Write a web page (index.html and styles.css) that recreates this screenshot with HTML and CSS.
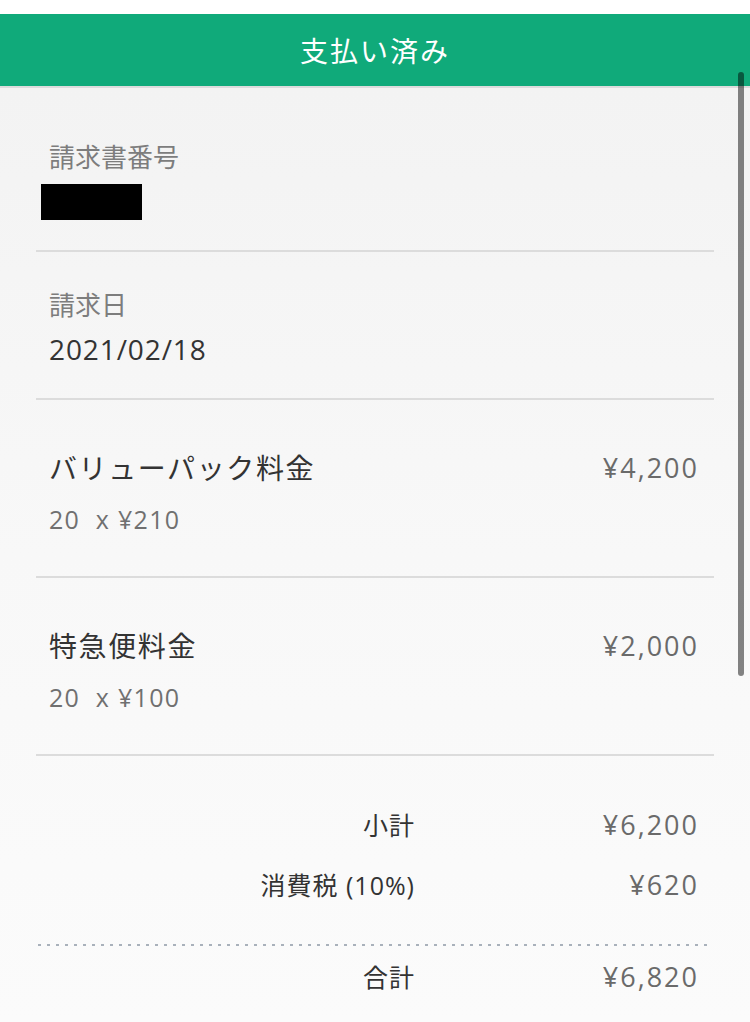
FILE: index.html
```html
<!DOCTYPE html>
<html lang="ja">
<head>
<meta charset="utf-8">
<title>支払い済み</title>
<link rel="stylesheet" href="styles.css">
</head>
<body>
<div class="topstrip"></div>
<header class="header"><h1 class="title">支払い済み</h1></header>
<main class="content">
  <section class="block block-first">
    <div class="label">請求書番号</div>
    <div class="redacted"></div>
  </section>
  <section class="block block-date">
    <div class="label">請求日</div>
    <div class="date">2021/02/18</div>
  </section>
  <section class="block item">
    <div class="item-row">
      <div class="item-name">バリューパック料金</div>
      <div class="price">¥4,200</div>
    </div>
    <div class="item-sub">20&nbsp;&nbsp;x ¥210</div>
  </section>
  <section class="block item">
    <div class="item-row">
      <div class="item-name">特急便料金</div>
      <div class="price">¥2,000</div>
    </div>
    <div class="item-sub">20&nbsp;&nbsp;x ¥100</div>
  </section>
  <section class="totals">
    <div class="t-row t-sub">
      <div class="t-label">小計</div>
      <div class="t-value">¥6,200</div>
    </div>
    <div class="t-row t-tax">
      <div class="t-label">消費税 (10%)</div>
      <div class="t-value">¥620</div>
    </div>
    <div class="dots"></div>
    <div class="t-row t-total">
      <div class="t-label">合計</div>
      <div class="t-value">¥6,820</div>
    </div>
  </section>
</main>
<div class="scrollbar"></div>
</body>
</html>
```
FILE: styles.css
```css
html, body {
  margin: 0;
  padding: 0;
}
body {
  width: 750px;
  height: 1022px;
  overflow: hidden;
  position: relative;
  background: #ffffff;
  font-family: "Open Sans", "Noto Sans CJK JP", sans-serif;
}
.topstrip {
  height: 14px;
  background: #ffffff;
}
.header {
  height: 72px;
  background: #10aa7a;
  border-bottom: 2px solid #dcdcdc;
  display: flex;
  align-items: center;
  justify-content: center;
}
.title {
  margin: 0;
  color: #ffffff;
  font-family: "Noto Sans CJK JP", sans-serif;
  font-weight: 400;
  font-size: 28px;
  letter-spacing: 2px;
  line-height: 40px;
}
.content {
  height: 934px;
  padding: 0 36px;
  background: linear-gradient(to bottom, #f3f3f3 0%, #f8f8f8 50%, #fbfbfb 100%);
}
.block {
  border-bottom: 2px solid #dcdcdc;
}
.block-first {
  padding: 51px 0 30px 13px;
}
.block-date {
  padding: 35px 0 29px 13px;
}
.label {
  font-family: "Noto Sans CJK JP", sans-serif;
  font-size: 26px;
  line-height: 34px;
  color: #7d7d7d;
}
.redacted {
  width: 101px;
  height: 36px;
  margin: 11px 0 0 -8px;
  background: #000000;
}
.date {
  margin-top: 8px;
  font-size: 28px;
  line-height: 40px;
  color: #333333;
  letter-spacing: 0.9px;
}
.item {
  padding: 47px 17px 39px 13px;
}
.item-row {
  display: flex;
  justify-content: space-between;
  align-items: center;
  height: 40px;
}
.item-name {
  font-family: "Noto Sans CJK JP", sans-serif;
  font-size: 28px;
  letter-spacing: 1.6px;
  color: #333333;
}
.price {
  font-size: 27px;
  letter-spacing: 2px;
  margin-right: -2px;
  color: #6a6a6a;
}
.item-sub {
  margin-top: 14px;
  font-size: 25px;
  line-height: 36px;
  letter-spacing: 1.3px;
  color: #707070;
}
.totals {
  padding-top: 48px;
}
.t-row {
  display: grid;
  grid-template-columns: 378px 1fr;
  align-items: center;
  height: 40px;
}
.t-tax {
  margin-top: 20px;
}
.t-label {
  justify-self: end;
  font-size: 25px;
  letter-spacing: 1px;
  margin-right: -1px;
  color: #333333;
}
.t-value {
  justify-self: end;
  padding-right: 17px;
  font-size: 27px;
  letter-spacing: 2px;
  margin-right: -2px;
  color: #6a6a6a;
}
.dots {
  margin: 40px 6px 0 2px;
  height: 2px;
  background: repeating-linear-gradient(to right, #a9b1bb 0 3px, transparent 3px 9px);
}
.t-total {
  margin-top: 10px;
}
.scrollbar {
  position: absolute;
  left: 738px;
  top: 72px;
  width: 6px;
  height: 604px;
  border-radius: 3px;
  background: rgba(0, 0, 0, 0.48);
}
```
